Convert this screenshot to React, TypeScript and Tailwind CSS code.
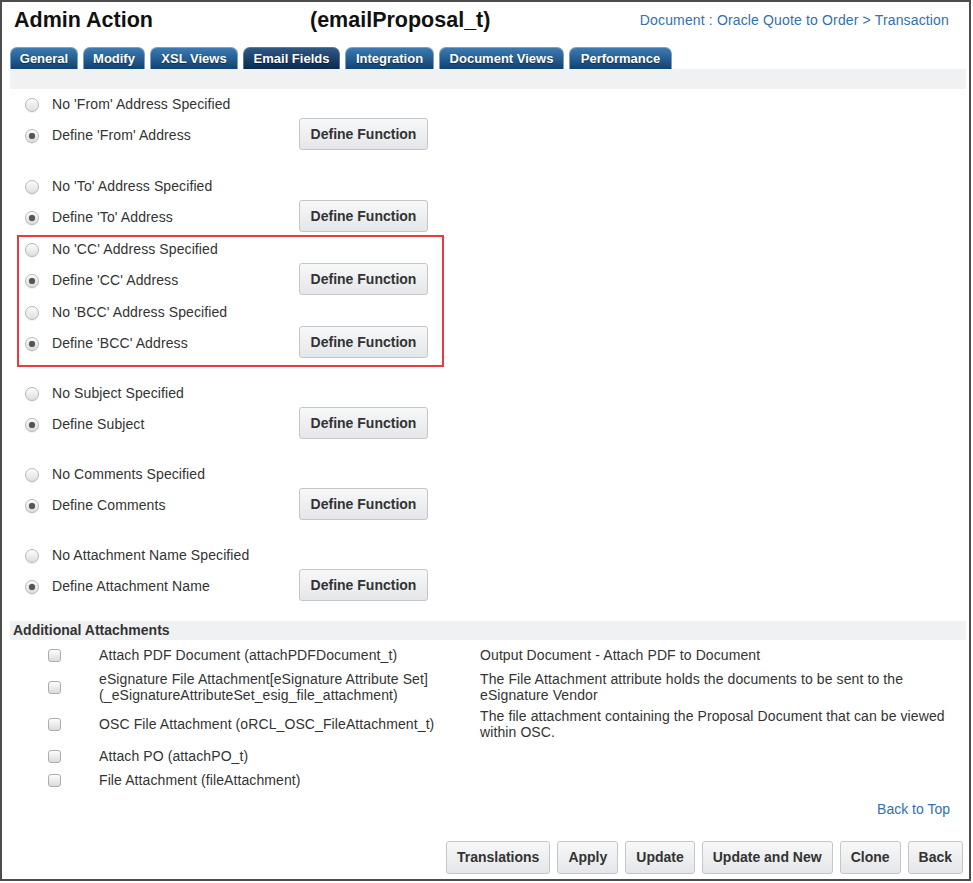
import React from "react";

const tabs = [
  { label: "General", w: "w-[68px]" },
  { label: "Modify", w: "w-[62px]" },
  { label: "XSL Views", w: "w-[88px]" },
  { label: "Email Fields", w: "w-[97px]", active: true },
  { label: "Integration", w: "w-[89px]" },
  { label: "Document Views", w: "w-[125px]" },
  { label: "Performance", w: "w-[103px]" },
];

const attachments = [
  {
    name: ["Attach PDF Document (attachPDFDocument_t)"],
    desc: ["Output Document - Attach PDF to Document"],
  },
  {
    name: [
      "eSignature File Attachment[eSignature Attribute Set]",
      "(_eSignatureAttributeSet_esig_file_attachment)",
    ],
    desc: [
      "The File Attachment attribute holds the documents to be sent to the",
      "eSignature Vendor",
    ],
  },
  {
    name: ["OSC File Attachment (oRCL_OSC_FileAttachment_t)"],
    desc: [
      "The file attachment containing the Proposal Document that can be viewed",
      "within OSC.",
    ],
    tight: true,
  },
  { name: ["Attach PO (attachPO_t)"], desc: [] },
  { name: ["File Attachment (fileAttachment)"], desc: [] },
];

function Radio({ checked }: { checked?: boolean }) {
  return (
    <span className="flex h-[14px] w-[14px] shrink-0 items-center justify-center rounded-full border border-[#b8b8b8] bg-gradient-to-b from-[#fdfdfd] to-[#dedede] shadow-[0_1px_1px_rgba(0,0,0,0.08)]">
      {checked && (
        <span className="h-[6px] w-[6px] rounded-full bg-[#555] shadow-[0_0_1px_#777]" />
      )}
    </span>
  );
}

function Checkbox() {
  return (
    <span className="block h-[13px] w-[13px] shrink-0 rounded-[3px] border border-[#a9adb2] bg-gradient-to-b from-[#fcfcfc] to-[#dcdcdc]" />
  );
}

function Button({ children, className = "" }: { children: React.ReactNode; className?: string }) {
  return (
    <button
      type="button"
      className={`flex items-center justify-center rounded-[3px] border border-[#c3c7cc] bg-gradient-to-b from-[#f7f8f9] to-[#e4e6e9] text-[14px] font-bold text-[#333] ${className}`}
    >
      {children}
    </button>
  );
}

function Group({ noLabel, defLabel, className = "" }: { noLabel: string; defLabel: string; className?: string }) {
  return (
    <div className={`flex h-[63px] flex-col ${className}`}>
      <div className="flex h-[24px] items-center pl-[15px] pt-[1px]">
        <Radio />
        <span className="ml-[13px] text-[14px] tracking-[0.1px] text-[#333]">{noLabel}</span>
      </div>
      <div className="flex h-[39px] items-start">
        <div className="flex h-[39px] w-[289px] items-center pl-[15px]">
          <Radio checked />
          <span className="ml-[13px] text-[14px] tracking-[0.1px] text-[#333]">{defLabel}</span>
        </div>
        <Button className="mt-[2px] h-[32px] w-[129px]">Define Function</Button>
      </div>
    </div>
  );
}

export default function App() {
  return (
    <div className="h-[883px] w-[973px] bg-white font-['Liberation_Sans',Arial,sans-serif]">
      <div className="flex h-[881px] w-[971px] flex-col border-2 border-[#4d4d4d] pl-2 pr-[3px]">
        {/* header */}
        <div className="h-[45px] pt-[6px]">
          <div className="flex h-6 items-center leading-6">
            <span className="w-[300px] pl-1 text-[21.5px] font-bold text-[#111]">Admin Action</span>
            <span className="text-[21.5px] font-bold text-[#111]">(emailProposal_t)</span>
            <span className="ml-auto mr-[17px] text-[14px] tracking-[0.15px] text-[#3470ab]">
              Document : Oracle Quote to Order &gt; Transaction
            </span>
          </div>
        </div>

        {/* tabs */}
        <div className="flex h-[22px] items-end gap-[5px]">
          {tabs.map((t) => (
            <div
              key={t.label}
              className={`flex h-[22px] items-center justify-center rounded-t-[7px] border border-b-0 text-[13px] font-bold text-white [text-shadow:0_1px_1px_rgba(0,0,0,0.5)] ${t.w} ${
                t.active
                  ? "border-[#5a7a9c] bg-gradient-to-b from-[#2f5886] to-[#0b2a50]"
                  : "border-[#7d9fc2] bg-gradient-to-b from-[#3c7bb2] to-[#0f4373]"
              }`}
            >
              {t.label}
            </div>
          ))}
        </div>
        <div className="h-[20px] bg-[#f0f1f3]" />

        {/* email fields */}
        <div className="mt-[3px] flex flex-col">
          <Group noLabel="No 'From' Address Specified" defLabel="Define 'From' Address" />
          <Group className="mt-[19px]" noLabel="No 'To' Address Specified" defLabel="Define 'To' Address" />
          <div className="ml-[9px] w-[423px] pb-[2px] outline-2 outline-[#ea3a40]">
            <div className="-ml-[9px]">
              <Group noLabel="No 'CC' Address Specified" defLabel="Define 'CC' Address" />
              <Group noLabel="No 'BCC' Address Specified" defLabel="Define 'BCC' Address" />
            </div>
          </div>
          <Group className="mt-[16px]" noLabel="No Subject Specified" defLabel="Define Subject" />
          <Group className="mt-[18px]" noLabel="No Comments Specified" defLabel="Define Comments" />
          <Group className="mt-[18px]" noLabel="No Attachment Name Specified" defLabel="Define Attachment Name" />
        </div>

        {/* additional attachments */}
        <div className="mt-[15px] flex h-[19px] items-center bg-[#f0f1f3] pl-[3px] text-[14px] font-bold text-[#333]">
          Additional Attachments
        </div>
        <div className="mt-[3px] flex flex-col">
          {attachments.map((a, i) => (
            <div
              key={i}
              className={`flex items-center py-1 text-[14px] leading-4 tracking-[0.1px] text-[#333] ${a.tight ? "-mt-[3px]" : ""}`}
            >
              <div className="w-[89px] pl-[38px]">
                <Checkbox />
              </div>
              <div className="w-[381px]">
                {a.name.map((l) => (
                  <div key={l}>{l}</div>
                ))}
              </div>
              <div className="flex-1">
                {a.desc.map((l) => (
                  <div key={l}>{l}</div>
                ))}
              </div>
            </div>
          ))}
        </div>

        <div className="mt-[9px] flex justify-end pr-[16px] text-[14px] leading-4 text-[#3470ab]">
          Back to Top
        </div>

        <div className="mt-[24px] flex justify-end gap-[7px] pr-[3px]">
          {["Translations", "Apply", "Update", "Update and New", "Clone", "Back"].map((b) => (
            <Button key={b} className="h-[33px] px-[10px]">
              {b}
            </Button>
          ))}
        </div>
      </div>
    </div>
  );
}
